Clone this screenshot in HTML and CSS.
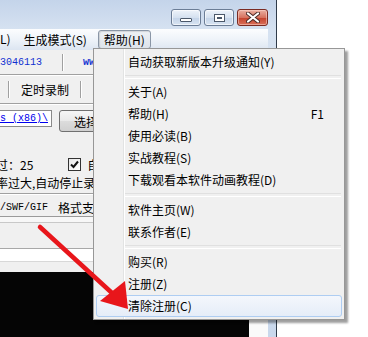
FILE: index.html
```html
<!DOCTYPE html>
<html lang="zh-CN">
<head>
    <meta charset="UTF-8">
    <title>帮助菜单</title>
    <link rel="stylesheet" href="styles.css">
</head>
<body>
    <div class="screen">
        <div class="window">
            <div class="titlebar">
                <span class="cbtn min"><i></i></span>
                <span class="cbtn max"><i></i></span>
                <span class="cbtn close">
                    <svg width="14" height="11" viewBox="0 0 14 11">
                        <path d="M2 1.5 L12 9.5 M12 1.5 L2 9.5" stroke="#4a2a26" stroke-width="4" stroke-linecap="round"/>
                        <path d="M2 1.5 L12 9.5 M12 1.5 L2 9.5" stroke="#fff" stroke-width="2.2" stroke-linecap="round"/>
                    </svg>
                </span>
            </div>
            <div class="client">
                <div class="menubar">
                    <span class="mb-item first">L)</span>
                    <span class="mb-item">生成模式(S)</span>
                    <span class="mb-item open">帮助(H)</span>
                </div>

                <div class="row info">
                    <span class="qq">3046113</span>
                    <span class="vsep"></span>
                    <span class="url">www.</span>
                </div>

                <div class="row toolbar">
                    <span class="vsep"></span>
                    <span class="tab">定时录制</span>
                    <span class="vsep"></span>
                    <span class="tab">工具</span>
                </div>

                <div class="row path">
                    <div class="path-box"><a href="#">s (x86)\</a></div>
                    <button class="btn">选择</button>
                </div>

                <div class="row opts">
                    <div class="opt-line">
                        <span class="cut">过：25</span>
                        <span class="check">
                            <svg width="9" height="9" viewBox="0 0 9 9">
                                <path d="M1 4.5 L3.5 7 L8 1.5" fill="none" stroke="#111" stroke-width="2"/>
                            </svg>
                        </span>
                        <span>自动</span>
                    </div>
                    <div class="opt-line">
                        <span class="cut">率过大,自动停止录制</span>
                    </div>
                </div>

                <div class="row formats">
                    <span class="mono">/SWF/GIF</span>
                    <span>格式支持</span>
                </div>

                <div class="strip"></div>
                <div class="blank"></div>
                <div class="field"></div>
                <div class="gap"></div>

                <div class="preview">
                    <div class="video"></div>
                    <div class="canvas"></div>
                </div>
            </div>
        </div>

        <div class="dropdown">
            <div class="item">自动获取新版本升级通知(Y)</div>
            <div class="sep"></div>
            <div class="item">关于(A)</div>
            <div class="item"><span class="label">帮助(H)</span><span class="key">F1</span></div>
            <div class="item">使用必读(B)</div>
            <div class="item">实战教程(S)</div>
            <div class="item">下载观看本软件动画教程(D)</div>
            <div class="sep"></div>
            <div class="item">软件主页(W)</div>
            <div class="item">联系作者(E)</div>
            <div class="sep"></div>
            <div class="item">购买(R)</div>
            <div class="item">注册(Z)</div>
            <div class="item active">清除注册(C)</div>
        </div>

        <!-- annotation arrow -->
        <svg class="arrow" width="368" height="337" viewBox="0 0 368 337">
            <line x1="40" y1="227" x2="112" y2="293" stroke="#e8161b" stroke-width="4.5" stroke-linecap="round"/>
            <polygon points="128,309 100,301 125,281" fill="#e8161b"/>
        </svg>
    </div>
</body>
</html>
```

FILE: styles.css
```css
* {
    box-sizing: border-box;
}

body {
    margin: 0;
    background: #fff;
    font-family: "Noto Sans CJK SC", "Liberation Sans", sans-serif;
    font-size: 12px;
    color: #000;
}

.screen {
    position: relative;
    width: 368px;
    height: 337px;
    overflow: hidden;
}

/* window frame */
.window {
    width: 277px;
    height: 337px;
    padding-right: 8px;
    border-right: 1px solid #2f3b4a;
    background: linear-gradient(#c4d4ea, #d6e2f1 30px, #c9d8ec);
    display: flex;
    flex-direction: column;
}

.titlebar {
    height: 29px;
    flex: none;
    display: flex;
    justify-content: flex-end;
    align-items: flex-start;
    padding-top: 9px;
    gap: 3px;
}

.cbtn {
    width: 30px;
    height: 17px;
    border: 1px solid #6b7d96;
    border-radius: 3px;
    background: linear-gradient(#eef3fa, #d5e1f0 50%, #c3d3e8 51%, #d8e4f2);
    box-shadow: inset 0 0 0 1px rgba(255, 255, 255, 0.6);
    display: flex;
    align-items: center;
    justify-content: center;
}

.cbtn.close {
    width: 31px;
    border-color: #7a2b22;
    background: linear-gradient(#eab0a2, #d7735f 50%, #c4412b 51%, #d9705a);
    box-shadow: inset 0 0 0 1px rgba(255, 220, 210, 0.5);
}

.cbtn.min i {
    width: 12px;
    height: 4px;
    margin-top: 5px;
    background: #fff;
    border: 1px solid #4b586a;
    border-radius: 1px;
}

.cbtn.max i {
    width: 11px;
    height: 8px;
    border: 1px solid #4b586a;
    background: #fff;
    box-shadow: inset 0 0 0 2px #fff, inset 0 0 0 3px #4b586a;
}

.client {
    flex: 1;
    background: #f0f0f0;
    display: flex;
    flex-direction: column;
    overflow: hidden;
}

/* menu bar */
.menubar {
    height: 21px;
    flex: none;
    display: flex;
    align-items: center;
    gap: 5px;
    background: linear-gradient(#fcfdfe, #eef3f9 50%, #dce5f1);
}

.mb-item {
    height: 19px;
    line-height: 17px;
    padding: 0 5px;
    border: 1px solid transparent;
    white-space: nowrap;
}

.mb-item.first {
    padding: 0 2px 0 0;
    border: none;
}

.mb-item.open {
    border-color: #8a96a6;
    border-radius: 3px;
    background: linear-gradient(#eef1f5, #dde3ea);
    box-shadow: inset 1px 1px 1px rgba(0, 0, 0, 0.12);
}

/* content rows */
.row {
    flex: none;
    display: flex;
    align-items: center;
    white-space: nowrap;
    border-bottom: 1px solid #a0a0a0;
    box-shadow: 0 1px 0 #fff;
}

.vsep {
    width: 2px;
    height: 17px;
    border-left: 1px solid #a0a0a0;
    border-right: 1px solid #fff;
    flex: none;
}

.info {
    height: 25px;
}

.qq {
    font-family: "Liberation Mono", monospace;
    font-size: 10px;
    color: #1030d0;
    width: 62px;
}

.url {
    font-family: "Liberation Mono", monospace;
    font-size: 10px;
    font-weight: bold;
    color: #1030d0;
    margin-left: 19px;
}

.toolbar {
    height: 28px;
    padding-left: 8px;
    margin-top: 1px;
}

.tab {
    padding: 0 11px;
    font-size: 12px;
}

.path {
    height: 32px;
    align-items: flex-start;
    padding-top: 6px;
    border-bottom: none;
    box-shadow: none;
}

.path-box {
    width: 52px;
    height: 17px;
    background: #fff;
    border: 1px solid #8a8a8a;
    border-left: none;
    overflow: hidden;
    display: flex;
    align-items: center;
}

.path-box a {
    font-family: "Liberation Mono", monospace;
    font-size: 10px;
    color: #0000ee;
    white-space: nowrap;
}

.btn {
    margin-left: 7px;
    width: 60px;
    height: 22px;
    border: 1px solid #707070;
    border-radius: 3px;
    background: linear-gradient(#f6f6f6, #e9e9e9 50%, #dcdcdc 51%, #d0d0d0);
    font-family: "Noto Sans CJK SC", sans-serif;
    font-size: 12px;
    text-align: left;
    padding: 0 0 0 14px;
}

.opts {
    height: 58px;
    flex-direction: column;
    align-items: flex-start;
    justify-content: flex-end;
    padding-bottom: 2px;
}

.opt-line {
    height: 18px;
    display: flex;
    align-items: center;
}

.cut {
    margin-left: -4px;
}

.check {
    width: 13px;
    height: 13px;
    margin: 0 6px 0 35px;
    border: 1px solid #333;
    background: linear-gradient(135deg, #e6e6e6, #fff);
    display: flex;
    align-items: center;
    justify-content: center;
}

.formats {
    height: 23px;
    padding-top: 5px;
    border-bottom-color: #9a9a9a;
}

.mono {
    font-family: "Liberation Mono", monospace;
    font-size: 10px;
    margin-right: 10px;
}

.strip {
    height: 6px;
    flex: none;
    background: #f7f7f7;
    border-bottom: 1px solid #c8c8c8;
}

.blank {
    height: 25px;
    flex: none;
}

.field {
    height: 14px;
    flex: none;
    background: #fff;
    border-top: 1px solid #a8a8a8;
    border-bottom: 1px solid #d8d8d8;
}

.gap {
    height: 10px;
    flex: none;
}

.preview {
    flex: 1;
    display: flex;
}

.video {
    width: 249px;
    background: #050505;
}

.canvas {
    flex: 1;
    background: #fafafa;
}

/* dropdown menu */
.dropdown {
    position: absolute;
    left: 93px;
    top: 48px;
    width: 252px;
    padding: 2px;
    border: 1px solid #979797;
    background:
        linear-gradient(to right, transparent 29px, #e2e3e3 29px, #e2e3e3 30px, #fff 30px, #fff 31px, transparent 31px),
        #f0f0f0;
    box-shadow: 3px 3px 2px rgba(0, 0, 0, 0.38);
}

.item {
    height: 22px;
    line-height: 20px;
    padding: 0 17px 0 31px;
    border: 1px solid transparent;
    border-radius: 3px;
    display: flex;
    white-space: nowrap;
}

.item .label {
    flex: 1;
}

.item.active {
    border-color: #aecdf2;
    background: linear-gradient(#f4f7fc, #e5edf8);
}

.sep {
    height: 8px;
    margin: 0 1px 0 29px;
    display: flex;
    flex-direction: column;
    justify-content: center;
}

.sep::before {
    content: "";
    height: 2px;
    border-top: 1px solid #e0e0e0;
    border-bottom: 1px solid #fff;
}

.arrow {
    position: absolute;
    left: 0;
    top: 0;
    pointer-events: none;
}
```
